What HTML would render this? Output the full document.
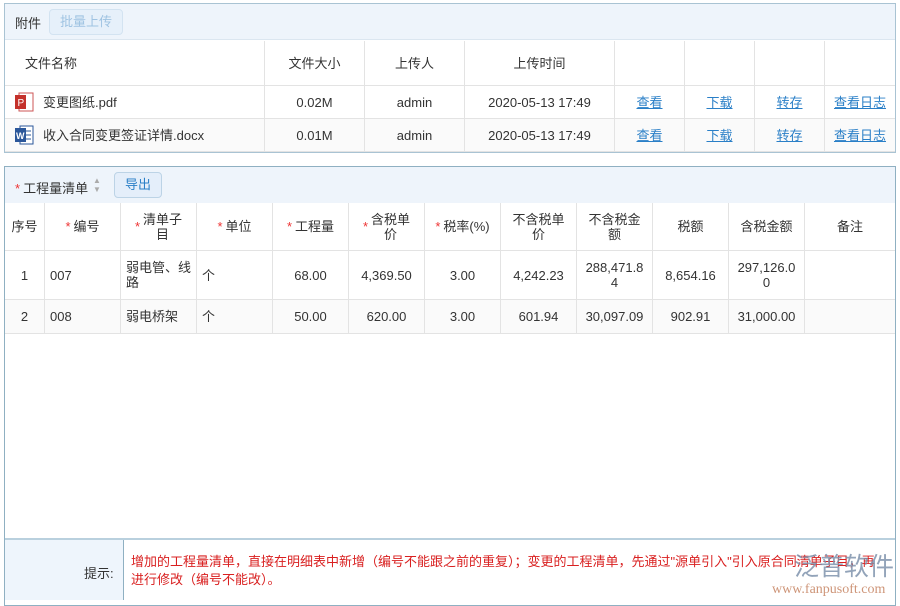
<!DOCTYPE html>
<html><head><meta charset="utf-8"><style>
*{margin:0;padding:0;box-sizing:border-box}
body{width:900px;height:600px;background:#fff;font-family:"Liberation Sans","Noto Sans CJK SC",sans-serif;font-size:13px;color:#333;position:relative;overflow:hidden}
.a{position:absolute}
.c{position:absolute;display:flex;align-items:center;justify-content:center;text-align:center;line-height:15px;border-right:1px solid #e3e3e3;border-bottom:1px solid #e3e3e3}
.l{justify-content:flex-start;text-align:left;padding-left:5px}
.s{color:#e33;margin-right:3px}
a{color:#2a7fc7;text-decoration:underline}
</style></head><body>
<div class="a" style="left:4px;top:3px;width:892px;height:150px;border:1px solid #a9c3d3"></div>
<div class="a" style="left:5px;top:4px;width:890px;height:36px;background:#eef4fb;border-bottom:1px solid #dbe6f0"></div>
<div class="a" style="left:15px;top:13px">附件</div>
<div class="a" style="left:49px;top:9px;width:74px;height:26px;border:1px solid #d3e3f1;border-radius:4px;background:#e6f0fa;color:#9fc3e2;text-align:center;line-height:24px">批量上传</div>
<div id="t1"></div>
<div class="a" style="left:4px;top:166px;width:892px;height:440px;border:1px solid #8fb0c2"></div>
<div class="a" style="left:5px;top:167px;width:890px;height:36px;background:#eef4fb"></div>
<div class="a" style="left:15px;top:178px"><span class="s">*</span>工程量清单</div>
<div class="a" style="left:93px;top:176px;width:10px;height:20px;color:#aaa;font-size:8px;line-height:9px">▲<br>▼</div>
<div class="a" style="left:114px;top:172px;width:48px;height:26px;border:1px solid #bcd3e6;border-radius:4px;background:#e4eefa;color:#2a7fc7;text-align:center;line-height:24px">导出</div>
<div id="t2"></div>
<div class="a" style="left:5px;top:538px;width:890px;height:2px;background:#b9d0de"></div>
<div class="a" style="left:5px;top:540px;width:119px;height:60px;background:#eef5fc;border-right:1px solid #8fb0c2"></div>
<div class="a" style="left:84px;top:563px">提示:</div>
<div class="a" style="left:131px;top:553px;width:770px;color:#d92020;font-size:13px;line-height:18px;white-space:nowrap">增加的工程量清单，直接在明细表中新增（编号不能跟之前的重复）；变更的工程清单，先通过"源单引入"引入原合同清单子目，再<br>进行修改（编号不能改）。</div>
<div class="a" style="left:794px;top:552px;font-size:25px;color:#7f93ad;opacity:.85;white-space:nowrap;line-height:30px">泛普软件</div>
<div class="a" style="left:772px;top:582px;font-family:'Liberation Serif',serif;font-size:14px;color:#c98a6a;opacity:.9;white-space:nowrap">www.fanpusoft.com</div>
<script>
function mk(id,cols,rows,tops,bgs){let h='';for(let r=0;r<rows.length;r++){for(let i=0;i<cols.length-1;i++){const v=rows[r][i]||'';const al=(typeof v==='object')?v:null;const txt=al?al.t:v;h+=`<div class="c${al&&al.l?' l':''}" style="left:${cols[i]}px;top:${tops[r]}px;width:${cols[i+1]-cols[i]}px;height:${tops[r+1]-tops[r]}px;background:${bgs[r]};${i==cols.length-2?'border-right:none;':''}">${txt}</div>`;}}document.getElementById(id).outerHTML=h;}
const pdf='<svg width="20" height="20" style="margin-right:8px"><rect x="4" y="1" width="14" height="18" fill="#fff" stroke="#c55"/><rect x="0" y="3" width="11" height="14" fill="#c4312b"/><text x="2.5" y="14" font-size="10" fill="#fff" font-family="Liberation Sans">P</text></svg>';
const doc='<svg width="20" height="20" style="margin-right:8px"><rect x="5" y="1" width="13" height="18" fill="#fff" stroke="#2b579a"/><line x1="11" y1="6" x2="16" y2="6" stroke="#2b579a"/><line x1="11" y1="10" x2="16" y2="10" stroke="#2b579a"/><line x1="11" y1="14" x2="16" y2="14" stroke="#2b579a"/><rect x="0" y="3" width="11" height="14" fill="#2b579a"/><text x="1" y="14" font-size="9" fill="#fff" font-family="Liberation Sans" font-weight="bold">W</text></svg>';
mk('t1',[5,265,365,465,615,685,755,825,895],[
[{t:'文件名称',l:1,},'文件大小','上传人','上传时间','','','',''],
[{t:pdf+'变更图纸.pdf',l:1},'0.02M','admin','2020-05-13 17:49','<a>查看</a>','<a>下载</a>','<a>转存</a>','<a>查看日志</a>'],
[{t:doc+'收入合同变更签证详情.docx',l:1},'0.01M','admin','2020-05-13 17:49','<a>查看</a>','<a>下载</a>','<a>转存</a>','<a>查看日志</a>']],
[41,86,119,152],['#fff','#fff','#fafafa']);
const S='<span class="s">*</span>';
mk('t2',[5,45,121,197,273,349,425,501,577,653,729,805,895],[
['序号',S+'编号',S+'清单子<br>目',S+'单位',S+'工程量',S+'含税单<br>价',S+'税率(%)','不含税单<br>价','不含税金<br>额','税额','含税金额','备注'],
['1',{t:'007',l:1},{t:'弱电管、线<br>路',l:1},{t:'个',l:1},'68.00','4,369.50','3.00','4,242.23','288,471.8<br>4','8,654.16','297,126.0<br>0',''],
['2',{t:'008',l:1},{t:'弱电桥架',l:1},{t:'个',l:1},'50.00','620.00','3.00','601.94','30,097.09','902.91','31,000.00','']],
[203,251,300,334],['#fff','#fff','#fafafa']);
document.querySelectorAll('.c').forEach(e=>{if(e.style.left==='5px'&&e.style.top==='41px')e.style.paddingLeft='20px';if(e.style.left==='5px'&&(e.style.top==='86px'||e.style.top==='119px'))e.style.paddingLeft='10px';});
</script>
</body></html>
